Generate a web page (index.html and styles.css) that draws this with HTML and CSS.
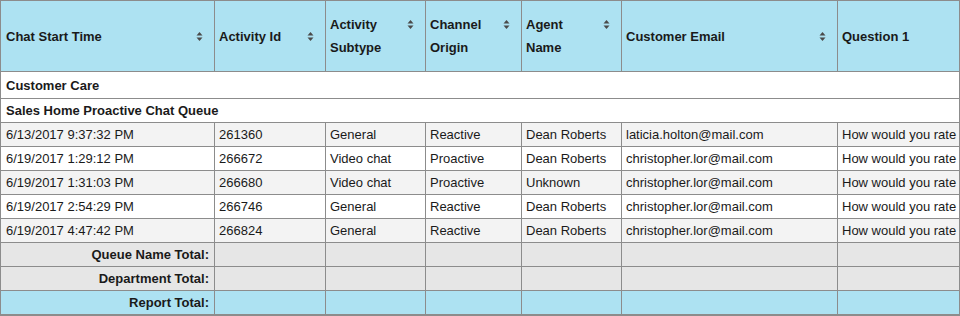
FILE: index.html
```html
<!DOCTYPE html>
<html>
<head>
<meta charset="utf-8">
<link rel="stylesheet" href="styles.css">
</head>
<body>
<div class="grid-wrap">
<table class="report">
<colgroup>
<col class="c1"><col class="c2"><col class="c3"><col class="c4"><col class="c5"><col class="c6"><col class="c7">
</colgroup>
<thead>
<tr class="head-row">
<th><div class="th-in"><span class="th-text">Chat Start Time</span><svg class="sort" width="7" height="11" viewBox="0 0 7 11"><polygon points="3.5,1 6.5,4.5 0.5,4.5"/><polygon points="0.5,6.5 6.5,6.5 3.5,10"/></svg></div></th>
<th><div class="th-in"><span class="th-text">Activity Id</span><svg class="sort" width="7" height="11" viewBox="0 0 7 11"><polygon points="3.5,1 6.5,4.5 0.5,4.5"/><polygon points="0.5,6.5 6.5,6.5 3.5,10"/></svg></div></th>
<th><div class="th-in"><span class="th-text">Activity Subtype</span><svg class="sort" width="7" height="11" viewBox="0 0 7 11"><polygon points="3.5,1 6.5,4.5 0.5,4.5"/><polygon points="0.5,6.5 6.5,6.5 3.5,10"/></svg></div></th>
<th><div class="th-in"><span class="th-text">Channel Origin</span><svg class="sort" width="7" height="11" viewBox="0 0 7 11"><polygon points="3.5,1 6.5,4.5 0.5,4.5"/><polygon points="0.5,6.5 6.5,6.5 3.5,10"/></svg></div></th>
<th><div class="th-in"><span class="th-text">Agent Name</span><svg class="sort" width="7" height="11" viewBox="0 0 7 11"><polygon points="3.5,1 6.5,4.5 0.5,4.5"/><polygon points="0.5,6.5 6.5,6.5 3.5,10"/></svg></div></th>
<th><div class="th-in"><span class="th-text">Customer Email</span><svg class="sort" width="7" height="11" viewBox="0 0 7 11"><polygon points="3.5,1 6.5,4.5 0.5,4.5"/><polygon points="0.5,6.5 6.5,6.5 3.5,10"/></svg></div></th>
<th><div class="th-in"><span class="th-text">Question 1</span></div></th>
</tr>
</thead>
<tbody>
<tr class="group g1"><td colspan="6">Customer Care</td><td class="gq"></td></tr>
<tr class="group g2"><td colspan="6">Sales Home Proactive Chat Queue</td><td class="gq"></td></tr>
<tr class="data alt"><td>6/13/2017 9:37:32 PM</td><td>261360</td><td>General</td><td>Reactive</td><td>Dean Roberts</td><td>laticia.holton@mail.com</td><td>How would you rate our service</td></tr>
<tr class="data"><td>6/19/2017 1:29:12 PM</td><td>266672</td><td>Video chat</td><td>Proactive</td><td>Dean Roberts</td><td>christopher.lor@mail.com</td><td>How would you rate our service</td></tr>
<tr class="data alt"><td>6/19/2017 1:31:03 PM</td><td>266680</td><td>Video chat</td><td>Proactive</td><td>Unknown</td><td>christopher.lor@mail.com</td><td>How would you rate our service</td></tr>
<tr class="data"><td>6/19/2017 2:54:29 PM</td><td>266746</td><td>General</td><td>Reactive</td><td>Dean Roberts</td><td>christopher.lor@mail.com</td><td>How would you rate our service</td></tr>
<tr class="data alt"><td>6/19/2017 4:47:42 PM</td><td>266824</td><td>General</td><td>Reactive</td><td>Dean Roberts</td><td>christopher.lor@mail.com</td><td>How would you rate our service</td></tr>
<tr class="total"><td class="lbl">Queue Name Total:</td><td></td><td></td><td></td><td></td><td></td><td></td></tr>
<tr class="total"><td class="lbl">Department Total:</td><td></td><td></td><td></td><td></td><td></td><td></td></tr>
<tr class="total report-total"><td class="lbl">Report Total:</td><td></td><td></td><td></td><td></td><td></td><td></td></tr>
</tbody>
</table>
</div>
</body>
</html>
```
FILE: styles.css
```css
html, body {
  margin: 0;
  padding: 0;
  background: #ffffff;
}
body {
  font-family: "Liberation Sans", Arial, sans-serif;
  font-size: 13px;
  color: #1a1a1a;
}
.grid-wrap {
  width: 960px;
  height: 316px;
  box-sizing: border-box;
  border: 1px solid #8c8c8c;
  border-bottom-width: 2px;
  overflow: hidden;
}
.report {
  border-collapse: collapse;
  table-layout: fixed;
  width: 1040px;
  margin: -1px 0 0 -1px;
}
.c1 { width: 214px; }
.c2 { width: 111px; }
.c3 { width: 100px; }
.c4 { width: 96px; }
.c5 { width: 100px; }
.c6 { width: 216px; }
.c7 { width: 203px; }
.report th,
.report td {
  border: 1px solid #8c8c8c;
  padding: 0 5px 0 4px;
  white-space: nowrap;
  overflow: hidden;
  text-align: left;
  vertical-align: middle;
}
.report th:first-child,
.report td:first-child {
  padding-left: 5px;
}
.head-row {
  height: 71px;
}
.head-row th {
  background: #ade2f2;
  font-weight: bold;
  color: #1a1a1a;
  white-space: normal;
}
.th-in {
  display: flex;
  align-items: flex-start;
}
.th-text {
  flex: 1;
  line-height: 23px;
}
.sort {
  flex: none;
  margin: 6px 6px 0 4px;
  fill: #4a4a4a;
}
.group td {
  background: #ffffff;
  font-weight: bold;
}
.group td:first-child {
  border-right-color: #ffffff;
}
.g1 { height: 27px; }
.g2 { height: 24px; }
.data { height: 24px; }
.data td { background: #ffffff; }
.data.alt td { background: #f3f3f3; }
.total { height: 24px; }
.total td {
  background: #e6e6e6;
  font-weight: bold;
}
.total .lbl {
  text-align: right;
}
.report-total td {
  background: #ade2f2;
}
```
